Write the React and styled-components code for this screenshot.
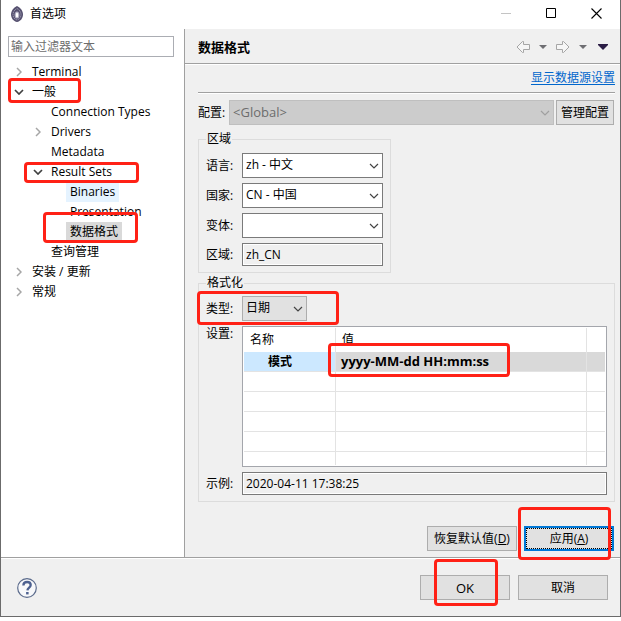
import React from 'react'
import styled, { createGlobalStyle, css } from 'styled-components'

const GlobalStyle = createGlobalStyle`
    * {
        box-sizing: border-box;
    }
    body {
        margin: 0;
        background: #fff;
        color: #000;
        font-family: "Open Sans", "Noto Sans CJK SC", sans-serif;
        font-size: 12px;
        line-height: 16px;
    }
    button, input, select {
        font: inherit;
        color: inherit;
        margin: 0;
        border-radius: 0;
    }
`

const tree = [
    { label: 'Terminal', level: 0, arrow: 'closed' },
    { label: '一般', level: 0, arrow: 'open', mark: '-4px 103px -1px 7px' },
    { label: 'Connection Types', level: 1 },
    { label: 'Drivers', level: 1, arrow: 'closed' },
    { label: 'Metadata', level: 1 },
    { label: 'Result Sets', level: 1, arrow: 'open', mark: '0 45px -1px 23px' },
    { label: 'Binaries', level: 2, state: 'hover' },
    { label: 'Presentation', level: 2 },
    { label: '数据格式', level: 2, state: 'selected', mark: '-10px 46px -1px 42px' },
    { label: '查询管理', level: 1 },
    { label: '安装 / 更新', level: 0, arrow: 'closed' },
    { label: '常规', level: 0, arrow: 'closed' },
]

function Chevron() {
    return (
        <ChevronSvg width="10" height="6" viewBox="0 0 10 6" aria-hidden="true">
            <path d="M1 1l4 4 4-4" fill="none" stroke="currentColor" strokeWidth="1.200" />
        </ChevronSvg>
    )
}

function Select({ id, value, disabled, flat }) {
    return (
        <SelectBox $disabled={disabled}>
            <SelectField id={id} disabled={disabled} $flat={flat} defaultValue={value}>
                <option value={value}>{value}</option>
            </SelectField>
            <Chevron />
        </SelectBox>
    )
}

function HistoryArrow({ forward }) {
    return (
        <svg width="16" height="14" viewBox="0 0 16 14" aria-hidden="true">
            <path
                d={forward
                    ? 'M1.5 4.5h6v-3h1l5.500 5.500-5.500 5.500h-1v-3h-6z'
                    : 'M14.500 4.500h-6v-3h-1L2 7l5.500 5.500h1v-3h6z'}
                fill="#f6f6f6"
                stroke="#a6a6a6"
            />
        </svg>
    )
}

function Triangle({ dark }) {
    return dark ? (
        <svg width="10" height="6" viewBox="0 0 10 6" aria-hidden="true">
            <path d="M0 0h10v1L5 6 0 1z" fill="#2b1d45" />
        </svg>
    ) : (
        <svg width="8" height="4" viewBox="0 0 8 4" aria-hidden="true">
            <path d="M0 0h8L4 4z" fill="#6e6e72" />
        </svg>
    )
}

function TitleBar() {
    return (
        <TitleBarStyled>
            <svg width="14" height="16" viewBox="0 0 14 16" aria-hidden="true">
                <path d="M7 0c3.500 1.500 6 5 6 8.500S10.500 15.500 7 16C3.500 15.500 1 12 1 8.500S3.500 1.500 7 0z" fill="#55506f" />
                <path d="M7 2.500c2.500 1.300 4 3.500 4 6s-1.500 4.800-4 5.500c-2.500-.7-4-3-4-5.500s1.500-4.700 4-6z" fill="none" stroke="#aaa7bd" strokeWidth=".8" strokeDasharray="1.500 .6" />
                <ellipse cx="7" cy="9" rx="2.400" ry="3.600" fill="#b3b0c4" />
                <ellipse cx="7" cy="9" rx="1.200" ry="2.500" fill="#fff" />
            </svg>
            <h1>首选项</h1>
            <div className="window-buttons">
                <button type="button" aria-label="最小化">
                    <svg width="11" height="11" viewBox="0 0 11 11"><path d="M0 5.500h10" stroke="#c4c4c4" /></svg>
                </button>
                <button type="button" aria-label="最大化">
                    <svg width="11" height="11" viewBox="0 0 11 11"><path d="M.5.5h9v9h-9z" fill="none" stroke="#000" /></svg>
                </button>
                <button type="button" aria-label="关闭">
                    <svg width="11" height="11" viewBox="0 0 11 11"><path d="M.5.5l10 10M10.500.5l-10 10" stroke="#000" strokeWidth="1.100" /></svg>
                </button>
            </div>
        </TitleBarStyled>
    )
}

function Sidebar() {
    return (
        <SidebarStyled>
            <FilterInput type="text" placeholder="输入过滤器文本" aria-label="输入过滤器文本" />
            <Tree role="tree">
                {tree.map((item) => (
                    <TreeRow key={item.label} role="treeitem" $level={item.level}>
                        <Twisty>
                            {item.arrow === 'closed' && (
                                <svg width="6" height="10" viewBox="0 0 6 10"><path d="M1 1l4 4-4 4" fill="none" stroke="#a6a6a6" strokeWidth="1.500" /></svg>
                            )}
                            {item.arrow === 'open' && (
                                <svg width="10" height="6" viewBox="0 0 10 6"><path d="M1 1l4 4 4-4" fill="none" stroke="#404040" strokeWidth="1.700" /></svg>
                            )}
                        </Twisty>
                        <TreeLabel $state={item.state}>{item.label}</TreeLabel>
                        {item.mark && <Mark $inset={item.mark} />}
                    </TreeRow>
                ))}
            </Tree>
        </SidebarStyled>
    )
}

function RegionGroup() {
    return (
        <Group $narrow>
            <legend>区域</legend>
            <FormGrid>
                <label htmlFor="language">语言:</label>
                <Select id="language" value="zh - 中文" />
                <label htmlFor="country">国家:</label>
                <Select id="country" value="CN - 中国" />
                <label htmlFor="variant">变体:</label>
                <Select id="variant" value="" />
                <label htmlFor="locale">区域:</label>
                <ReadOnlyInput id="locale" type="text" readOnly value="zh_CN" />
            </FormGrid>
        </Group>
    )
}

function FormatGroup() {
    return (
        <Group>
            <legend>格式化</legend>
            <FormGrid>
                <label htmlFor="type">类型:</label>
                <TypeCell>
                    <Select id="type" value="日期" flat />
                    <Mark $inset="-5px -32px -4px -45px" />
                </TypeCell>
                <TopLabel id="settings-label">设置:</TopLabel>
                <TableBox>
                    <SettingsTable aria-labelledby="settings-label">
                        <colgroup>
                            <col className="name" />
                            <col />
                            <col className="rest" />
                        </colgroup>
                        <thead>
                            <tr>
                                <th>名称</th>
                                <th>值</th>
                                <th></th>
                            </tr>
                        </thead>
                        <tbody>
                            <tr className="selected">
                                <td>模式</td>
                                <td>
                                    <MarkedValue>
                                        yyyy-MM-dd HH:mm:ss
                                        <Mark $inset="-10px -21px -8px -13px" />
                                    </MarkedValue>
                                </td>
                                <td></td>
                            </tr>
                            {[1, 2, 3, 4].map((row) => (
                                <tr key={row}><td></td><td></td><td></td></tr>
                            ))}
                            <tr className="last"><td></td><td></td><td></td></tr>
                        </tbody>
                    </SettingsTable>
                </TableBox>
                <label htmlFor="sample">示例:</label>
                <ReadOnlyInput id="sample" type="text" readOnly value="2020-04-11 17:38:25" />
            </FormGrid>
        </Group>
    )
}

function App() {
    return (
        <Window>
            <GlobalStyle />
            <TitleBar />
            <Body>
                <Sidebar />
                <Page>
                    <PageHeader>
                        <h2>数据格式</h2>
                        <nav>
                            <button type="button" aria-label="后退"><HistoryArrow /></button>
                            <button type="button" aria-label="后退历史"><Triangle /></button>
                            <button type="button" aria-label="前进"><HistoryArrow forward /></button>
                            <button type="button" aria-label="前进历史"><Triangle /></button>
                            <button type="button" aria-label="菜单"><Triangle dark /></button>
                        </nav>
                    </PageHeader>
                    <Content>
                        <LinkRow>
                            <a href="#datasource">显示数据源设置</a>
                        </LinkRow>
                        <ProfileRow>
                            <label htmlFor="profile">配置:</label>
                            <Select id="profile" value="<Global>" disabled />
                            <Button type="button" $compact>管理配置</Button>
                        </ProfileRow>
                        <RegionGroup />
                        <FormatGroup />
                        <Actions>
                            <Button type="button">恢复默认值(<u>D</u>)</Button>
                            <MarkedButton>
                                <Button type="button" $focused>应用(<u>A</u>)</Button>
                                <Mark $inset="-19px 3px -9px -6px" />
                            </MarkedButton>
                        </Actions>
                    </Content>
                </Page>
            </Body>
            <Footer>
                <HelpButton type="button" aria-label="帮助">
                    <svg width="20" height="20" viewBox="0 0 20 20" aria-hidden="true">
                        <circle cx="10" cy="10" r="9.300" fill="#f7f8fa" stroke="#5b6b8c" strokeWidth="1.200" />
                        <path d="M6.400 7.400C6.400 5.200 7.900 4 10.100 4s3.600 1.200 3.600 3.100c0 2.500-3.100 2.400-3.300 5.200" fill="none" stroke="#4d6190" strokeWidth="2.300" />
                        <path d="M9.100 14h2.500v2.400H9.100z" fill="#4d6190" />
                    </svg>
                </HelpButton>
                <MarkedButton>
                    <Button type="button" $latin>OK</Button>
                    <Mark $inset="-16px 12px -6px 14px" />
                </MarkedButton>
                <Button type="button">取消</Button>
            </Footer>
        </Window>
    )
}

const Window = styled.div`
    display: flex;
    flex-direction: column;
    min-height: calc(100vh - 4px);
    border: 1px solid #6b6b6b;
    border-top: 0;
    background: #f0f0f0;
`

/* red highlight drawn over the control it belongs to */
const Mark = styled.span`
    position: absolute;
    inset: ${({ $inset }) => $inset};
    border: 3px solid #ff2116;
    border-radius: 4px;
    pointer-events: none;
    z-index: 1;
`

const TitleBarStyled = styled.header`
    display: flex;
    align-items: center;
    height: 29px;
    padding: 0 18px 2px 9px;
    background: #fff;

    h1 {
        flex: 1;
        margin: 0 0 0 6px;
        font-size: 12px;
        font-weight: 400;
    }
    .window-buttons {
        display: flex;
        gap: 34px;
    }
    button {
        display: flex;
        padding: 0;
        border: 0;
        background: none;
    }
`

const Body = styled.main`
    display: flex;
    flex: 1;
    border-bottom: 1px solid #a0a0a0;
`

const SidebarStyled = styled.aside`
    flex: 0 0 184px;
    padding: 7px 0 0;
    background: #fff;
    border-right: 1px solid #a0a0a0;
`

const FilterInput = styled.input`
    display: block;
    width: 166px;
    height: 21px;
    margin-left: 7px;
    padding: 0 2px;
    border: 1px solid #abadb3;
    background: #fff;

    &::placeholder {
        color: #6d6d6d;
        opacity: 1;
    }
`

const Tree = styled.ul`
    margin: 5px 0 0;
    padding: 0;
    list-style: none;
`

const TreeRow = styled.li`
    position: relative;
    display: flex;
    align-items: center;
    height: 20px;
    padding-left: ${({ $level }) => 11 + $level * 19}px;
`

const Twisty = styled.span`
    display: flex;
    align-items: center;
    justify-content: center;
    width: 14px;
    height: 16px;
`

const TreeLabel = styled.span`
    height: 20px;
    margin-left: 2px;
    padding: 0 4px;
    line-height: 20px;
    white-space: nowrap;
    ${({ $state }) => $state === 'hover' && css`background: #e5f3ff;`}
    ${({ $state }) => $state === 'selected' && css`background: #d9d9d9;`}
`

const Page = styled.section`
    flex: 1;
    display: flex;
    flex-direction: column;
    min-width: 0;
`

const PageHeader = styled.div`
    display: flex;
    align-items: center;
    justify-content: space-between;
    height: 35px;
    padding: 2px 12px 0 13px;
    border-bottom: 1px solid #a0a0a0;
    box-shadow: 0 1px #fff;

    h2 {
        margin: 0;
        font-size: 13px;
        font-weight: 700;
    }
    nav {
        display: flex;
        align-items: center;
        gap: 8px;
    }
    button {
        display: flex;
        padding: 0;
        border: 0;
        background: none;
    }
    button:last-child {
        margin-left: 3px;
    }
`

const Content = styled.div`
    padding: 6px 5px 5px 13px;
`

const LinkRow = styled.div`
    display: flex;
    justify-content: flex-end;
    padding-bottom: 6px;
    border-bottom: 1px solid #a0a0a0;
    box-shadow: 0 1px #fff;

    a {
        color: #0066cc;
        text-underline-offset: 2px;
    }
`

const ProfileRow = styled.div`
    display: grid;
    grid-template-columns: auto 1fr auto;
    align-items: center;
    column-gap: 2px;
    margin-top: 7px;
    padding-right: 1px;

    label {
        width: 29px;
    }
`

const SelectBox = styled.div`
    display: grid;
    grid-template-columns: 1fr 14px;
    align-items: center;
    color: ${({ $disabled }) => ($disabled ? '#a0a0a0' : '#444')};
`

const SelectField = styled.select`
    grid-area: 1 / 1 / 2 / 3;
    width: 100%;
    height: 25px;
    padding: 0 18px 2px 3px;
    appearance: none;
    border: 1px solid ${({ $flat }) => ($flat ? '#adadad' : '#7a7a7a')};
    background: ${({ $flat }) => ($flat ? '#e1e1e1' : '#fff')};
    color: #000;

    &:disabled {
        border-color: #bfbfbf;
        background: #ccc;
        color: #6d6d6d;
        font-size: 13px;
        opacity: 1;
    }
`

const ChevronSvg = styled.svg`
    grid-area: 1 / 2;
    pointer-events: none;
`

const Button = styled.button`
    width: ${({ $compact }) => ($compact ? 58 : 90)}px;
    height: 25px;
    padding: 0;
    border: 1px solid #adadad;
    background: #e1e1e1;
    font-size: ${({ $latin }) => ($latin ? 13 : 12)}px;
    white-space: nowrap;

    ${({ $focused }) => $focused && css`
        border: 2px solid #0078d7;
        outline: 1px dotted #000;
        outline-offset: -3px;
    `}
`

const Group = styled.fieldset`
    width: ${({ $narrow }) => ($narrow ? '193px' : 'auto')};
    min-width: 0;
    margin: ${({ $narrow }) => ($narrow ? '6px 0 0' : '2px 0 0')};
    padding: ${({ $narrow }) => ($narrow ? '6px 7px' : '5px 7px 6px')};
    border: 1px solid #dcdcdc;

    legend {
        padding: 0 1px;
        height: 16px;
    }
`

const FormGrid = styled.div`
    display: grid;
    grid-template-columns: 36px 1fr;
    align-items: center;
    row-gap: 5px;
`

const TopLabel = styled.span`
    align-self: start;
`

const TypeCell = styled.div`
    position: relative;
    width: 65px;
`

const ReadOnlyInput = styled.input`
    width: 100%;
    height: 23px;
    padding: 0 3px;
    border: 1px solid #7a7a7a;
    background: #f0f0f0;
    box-shadow: inset 0 0 0 1px #fff;
`

const TableBox = styled.div`
    padding: 1px;
    border: 1px solid #a4a6ac;
    background: #fff;
`

const SettingsTable = styled.table`
    width: 100%;
    table-layout: fixed;
    border-collapse: separate;
    border-spacing: 0;

    .name {
        width: 92px;
    }
    .rest {
        width: 18px;
    }
    th, td {
        height: 20px;
        padding: 0 5px;
        border-right: 1px solid #e3e3e3;
        border-bottom: 1px solid #e3e3e3;
        text-align: left;
        white-space: nowrap;
    }
    th {
        height: 24px;
        padding: 0 6px;
        border-bottom: 0;
        font-weight: 400;
    }
    th:last-child, td:last-child {
        padding: 0;
        border-right: 0;
    }
    .last td {
        height: 13px;
        border-bottom: 0;
    }
    .selected td {
        background: #d9d9d9;
        font-weight: 700;
    }
    .selected td:first-child {
        padding-left: 24px;
        background: #cce8ff;
    }
`

const MarkedValue = styled.span`
    position: relative;
    display: inline-block;
    font-size: 13px;
`

const Actions = styled.div`
    display: flex;
    justify-content: flex-end;
    gap: 7px;
    margin-top: 24px;
    padding-right: 1px;
`

const MarkedButton = styled.div`
    position: relative;
    display: flex;
`

const Footer = styled.footer`
    display: flex;
    align-items: center;
    gap: 8px;
    height: 58px;
    padding: 0 12px 0 16px;
    border-top: 1px solid #fff;
`

const HelpButton = styled.button`
    display: flex;
    margin-right: auto;
    padding: 0;
    border: 0;
    background: none;
`

export default App
